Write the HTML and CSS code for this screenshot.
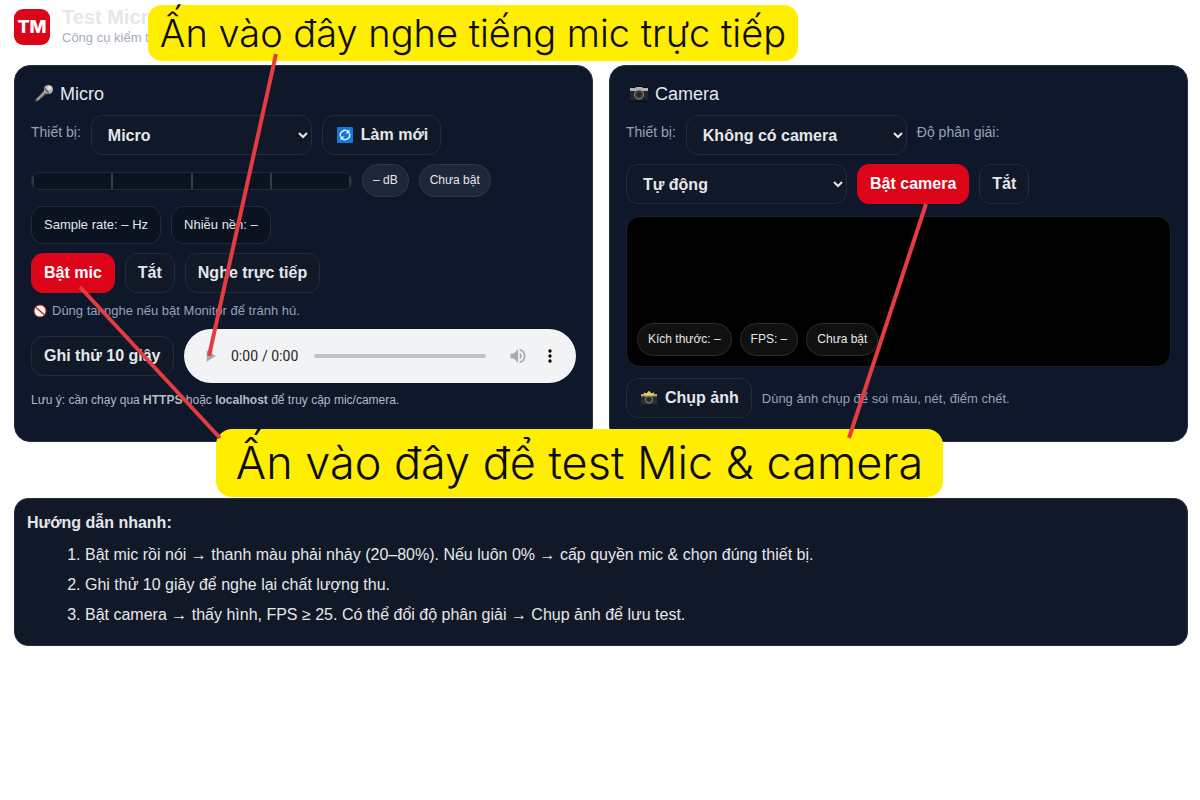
FILE: index.html
```
<!DOCTYPE html>
<html lang="vi">
<head>
  <meta charset="UTF-8">
  <meta name="viewport" content="width=device-width, initial-scale=1.0">
  <title>Test Micro &amp; Camera</title>
  <link rel="stylesheet" href="styles.css">
</head>
<body>
  <div class="page">
    <header class="header">
      <div class="logo">TM</div>
      <div>
        <h1>Test Micro</h1>
        <p class="subtitle">Công cụ kiểm tra</p>
      </div>
    </header>

    <main class="grid">
      <section class="card">
        <h2>
          <svg class="icon-title" viewBox="0 0 20 20">
            <path d="M0 16 L11 4 L15 9 L4 18 Q0 20 0 16Z" fill="#43464b" stroke="#090b0f"/>
            <path d="M3 16 L12 7" stroke="#a7a39d" stroke-width="2"/>
            <circle cx="14.500" cy="5.500" r="4.500" fill="#b9b7b3"/>
            <path d="M10.500 4.500 L15 9.500" stroke="#595a5d" stroke-width="1.500"/>
            <circle cx="15.500" cy="4" r="2" fill="#e8e5df"/>
          </svg>
          Micro
        </h2>
        <div class="row">
          <label for="micSelect">Thiết bị:</label>
          <select id="micSelect"><option>Micro</option></select>
          <button type="button" class="btn btn-icon">
            <svg class="icon" viewBox="0 0 16 16">
              <rect width="16" height="16" rx="1" fill="#1479d2"/>
              <path d="M3.500 9.500 A4.700 4.700 0 0 1 11.500 5 M12.500 6.500 A4.700 4.700 0 0 1 4.500 11" fill="none" stroke="#d9efff" stroke-width="1.500"/>
              <path d="M12.500 2.500 V6.500 H8.500Z M3.500 13.500 V9.500 H7.500Z" fill="#d9efff"/>
            </svg>
            Làm mới
          </button>
        </div>
        <div class="row">
          <div class="meter"><span></span><span></span><span></span><span></span></div>
          <span class="pill">– dB</span>
          <span class="pill">Chưa bật</span>
        </div>
        <div class="row">
          <span class="stat">Sample rate: – Hz</span>
          <span class="stat">Nhiễu nền: –</span>
        </div>
        <div class="row">
          <button type="button" class="btn btn-primary">Bật mic</button>
          <button type="button" class="btn">Tắt</button>
          <button type="button" class="btn">Nghe trực tiếp</button>
        </div>
        <p class="hint">
          <svg class="icon-small" viewBox="0 0 14 14">
            <circle cx="7" cy="7" r="6" fill="#fff3e8" stroke="#a8322d"/>
            <path d="M3 3.500 L11 10.500" stroke="#a8322d" stroke-width="1.500"/>
          </svg>
          Dùng tai nghe nếu bật Monitor để tránh hú.
        </p>
        <div class="row">
          <button type="button" class="btn">Ghi thử 10 giây</button>
          <audio class="player" controls></audio>
        </div>
        <p class="note">Lưu ý: cần chạy qua <b>HTTPS</b> hoặc <b>localhost</b> để truy cập mic/camera.</p>
      </section>

      <section class="card">
        <h2>
          <svg class="icon-title" viewBox="0 0 20 20">
            <path d="M0 4 H6 L7 3 H13 L14 4 H20 V17 H0Z" fill="#25262a" stroke="#090b0f"/>
            <path d="M1 4 H6 L7 3 H13 L14 4 H19 V7 H1Z" fill="#b5b2ad"/>
            <circle cx="10" cy="10.500" r="4.500" fill="#34373c" stroke="#99958f"/>
            <circle cx="10" cy="10.500" r="2" fill="#22262c"/>
          </svg>
          Camera
        </h2>
        <div class="row">
          <label for="camSelect">Thiết bị:</label>
          <select id="camSelect"><option>Không có camera</option></select>
          <label for="resSelect">Độ phân giải:</label>
        </div>
        <div class="row">
          <select id="resSelect"><option>Tự động</option></select>
          <button type="button" class="btn btn-primary">Bật camera</button>
          <button type="button" class="btn">Tắt</button>
        </div>
        <div class="preview">
          <span class="pill pill-dark">Kích thước: –</span>
          <span class="pill pill-dark">FPS: –</span>
          <span class="pill pill-dark">Chưa bật</span>
        </div>
        <div class="row">
          <button type="button" class="btn btn-icon">
            <svg class="icon" viewBox="0 0 20 20">
              <path d="M0 5 H20 V18 H0Z" fill="#2b2c2d"/>
              <path d="M0 5 H20 V8 H0Z" fill="#aaa78f"/>
              <path d="M3 3 L7 4 L10 1 L13 4 L17 3 L15 7 H5Z" fill="#e5cf4b"/>
              <circle cx="10" cy="12" r="4.500" fill="#34373c" stroke="#99958f"/>
              <circle cx="10" cy="12" r="2" fill="#22262c"/>
            </svg>
            Chụp ảnh
          </button>
          <span class="hint-inline">Dùng ảnh chụp để soi màu, nét, điểm chết.</span>
        </div>
      </section>
    </main>

    <section class="guide">
      <h3>Hướng dẫn nhanh:</h3>
      <ol>
        <li>Bật mic rồi nói → thanh màu phải nhảy (20–80%). Nếu luôn 0% → cấp quyền mic &amp; chọn đúng thiết bị.</li>
        <li>Ghi thử 10 giây để nghe lại chất lượng thu.</li>
        <li>Bật camera → thấy hình, FPS ≥ 25. Có thể đổi độ phân giải → Chụp ảnh để lưu test.</li>
      </ol>
    </section>

    <!-- Callouts over the page -->
    <div class="callout callout-listen">Ấn vào đây nghe tiếng mic trực tiếp</div>
    <div class="callout callout-test">Ấn vào đây để test Mic &amp; camera</div>
    <svg class="arrows" width="1200" height="800">
      <path d="M276 54 L209 356"/>
      <path d="M80 287 L220 438"/>
      <path d="M926 204 L849 438"/>
    </svg>
  </div>
</body>
</html>
```
FILE: styles.css
```
* {
  box-sizing: border-box;
}
body {
  margin: 0;
  background-color: #fff;
  color: #e5e7eb;
  font-family: "Liberation Sans", Arial, sans-serif;
  font-size: 16px;
}
h1, h2, h3, p {
  margin: 0;
}
.page {
  position: relative;
  padding: 7px 12px 0 14px;
}
.header {
  display: flex;
  align-items: center;
  gap: 12px;
  height: 40px;
  margin-bottom: 18px;
}
.logo {
  width: 36px;
  height: 36px;
  border-radius: 9px;
  background-color: #dc0418;
  color: #fff;
  font: 800 18px/36px Inter, sans-serif;
  text-align: center;
}
h1 {
  font-size: 20px;
  line-height: 22px;
}
.subtitle {
  color: #a3adbd;
  font-size: 13px;
  line-height: 20px;
}
.grid {
  display: grid;
  grid-template-columns: 1fr 1fr;
  gap: 16px;
}
.card {
  display: flex;
  flex-direction: column;
  gap: 9px;
  padding: 16px 16px 23px;
  border: 1px solid #272e3c;
  border-radius: 16px;
  background-color: #0f172a;
}
h2 {
  display: flex;
  align-items: center;
  gap: 6px;
  padding-left: 3px;
  font-size: 18px;
  font-weight: normal;
  line-height: 24px;
}
.icon-title {
  width: 20px;
  height: 20px;
}
.icon {
  width: 16px;
  height: 16px;
}
.icon-small {
  width: 14px;
  height: 14px;
}
.row {
  display: flex;
  align-items: center;
  gap: 10px;
}
label {
  margin-bottom: 6px;
  color: #94a3b8;
  font-size: 14px;
}
select,
.btn {
  height: 40px;
  border: 1px solid #242b38;
  border-radius: 12px;
  background-color: #111827;
  color: #e5e7eb;
  font-family: inherit;
  font-size: 16px;
  font-weight: bold;
}
select {
  width: 221px;
  padding: 0 0 0 12px;
}
.btn {
  padding: 0 12px;
  white-space: nowrap;
}
.btn-icon {
  display: flex;
  align-items: center;
  gap: 8px;
  padding: 0 12px 0 14px;
}
.btn-primary {
  border-color: #dc0418;
  background-color: #dc0418;
  color: #fff;
}
.meter {
  display: flex;
  width: 321px;
  height: 18px;
  border: 1px solid #242b38;
  border-radius: 8px;
  background-color: #0b1220;
  overflow: hidden;
}
.meter span {
  flex: 1;
  border-left: 2px solid #343b47;
}
.meter span:last-child {
  border-right: 2px solid #343b47;
}
.pill {
  padding: 0 10px;
  border: 1px solid #303747;
  border-radius: 16px;
  background-color: #1f2638;
  font-size: 12px;
  line-height: 31px;
}
.pill-dark {
  border-color: #2b2b2b;
  background-color: #101010;
}
.stat {
  padding: 0 12px;
  border: 1px solid #242b38;
  border-radius: 12px;
  background-color: #0b1220;
  font-size: 13px;
  line-height: 36px;
}
.hint {
  display: flex;
  align-items: center;
  gap: 5px;
  padding-left: 2px;
  color: #94a3b8;
  font-size: 13px;
  line-height: 18px;
}
.hint-inline {
  color: #94a3b8;
  font-size: 13px;
}
.player {
  flex: 1;
  max-width: 392px;
  min-width: 0;
  height: 54px;
}
.note {
  color: #b5bac4;
  font-size: 12px;
  line-height: 16px;
}
.preview {
  display: flex;
  align-items: flex-end;
  gap: 8px;
  height: 151px;
  margin: 3px 0 2px;
  padding: 10px;
  border: 1px solid #1b202b;
  border-radius: 14px;
  background-color: #000;
}
.guide {
  margin-top: 56px;
  padding: 9px 12px 15px;
  border: 1px solid #272e3c;
  border-radius: 14px;
  background-color: #111827;
}
h3 {
  font-size: 16px;
  line-height: 30px;
}
ol {
  margin: 2px 0 0;
  padding-left: 58px;
  line-height: 30px;
}
.callout {
  position: absolute;
  background-color: #ffee00;
  color: #0c0c05;
  font-family: Inter, sans-serif;
  font-weight: 300;
  text-align: center;
  white-space: nowrap;
}
.callout-listen {
  top: 5px;
  left: 148px;
  width: 650px;
  border-radius: 14px;
  font-size: 38px;
  line-height: 56px;
}
.callout-test {
  top: 429px;
  left: 216px;
  width: 727px;
  border-radius: 16px;
  font-size: 45px;
  line-height: 68px;
}
.arrows {
  position: absolute;
  top: 0;
  left: 0;
  fill: none;
  stroke: #e43c42;
  stroke-width: 4;
  pointer-events: none;
}
```
